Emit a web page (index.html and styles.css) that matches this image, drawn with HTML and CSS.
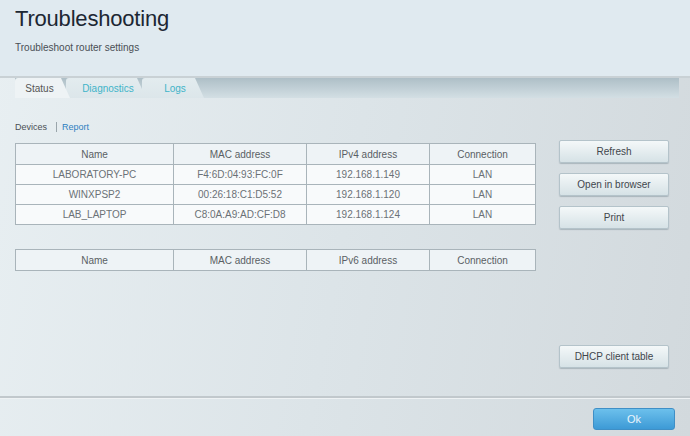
FILE: index.html
```html
<!DOCTYPE html>
<html lang="en">
<head>
    <meta charset="UTF-8">
    <title>Troubleshooting</title>
    <link rel="stylesheet" href="styles.css">
</head>
<body>
    <div class="header">
        <h1>Troubleshooting</h1>
        <div class="subtitle">Troubleshoot router settings</div>
    </div>
    <div class="tabbar">
        <div class="tab active">Status</div>
        <div class="tab">Diagnostics</div>
        <div class="tab">Logs</div>
    </div>
    <div class="main">
        <div class="left">
            <div class="subnav">
                <span class="current">Devices</span>
                <span class="sep"></span>
                <a class="link">Report</a>
            </div>
            <table class="grid">
                <tr>
                    <th class="c-name">Name</th>
                    <th class="c-mac">MAC address</th>
                    <th class="c-ip">IPv4 address</th>
                    <th>Connection</th>
                </tr>
                <tr><td>LABORATORY-PC</td><td>F4:6D:04:93:FC:0F</td><td>192.168.1.149</td><td>LAN</td></tr>
                <tr><td>WINXPSP2</td><td>00:26:18:C1:D5:52</td><td>192.168.1.120</td><td>LAN</td></tr>
                <tr><td>LAB_LAPTOP</td><td>C8:0A:A9:AD:CF:D8</td><td>192.168.1.124</td><td>LAN</td></tr>
            </table>
            <table class="grid second">
                <tr>
                    <th class="c-name">Name</th>
                    <th class="c-mac">MAC address</th>
                    <th class="c-ip">IPv6 address</th>
                    <th>Connection</th>
                </tr>
            </table>
        </div>
        <div class="right">
            <button class="btn">Refresh</button>
            <button class="btn">Open in browser</button>
            <button class="btn">Print</button>
            <button class="btn dhcp">DHCP client table</button>
        </div>
    </div>
    <div class="footer">
        <button class="ok">Ok</button>
    </div>
</body>
</html>
```

FILE: styles.css
```css
body {
    margin: 0;
    width: 690px;
    height: 436px;
    overflow: hidden;
    font-family: 'Liberation Sans', Arial, sans-serif;
    color: #555;
    background: linear-gradient(100deg, #e8eff2 0%, #dce4e8 50%, #d2d9dd 100%);
    display: flex;
    flex-direction: column;
}

.header {
    height: 78px;
    box-sizing: border-box;
    padding: 6px 15px 0;
    background: #e0eaf0;
    border-bottom: 2px solid #c9d1d5;
}

h1 {
    margin: 0;
    font-size: 22px;
    font-weight: normal;
    color: #1c2733;
    letter-spacing: -0.2px;
}

.subtitle {
    margin-top: 10px;
    font-size: 10px;
    color: #4a4f55;
}

.tabbar {
    display: flex;
    height: 20px;
    margin: 0 11px 0 15px;
    background: linear-gradient(to bottom, #aebfc7, #d3dfe4);
}

.tab {
    position: relative;
    height: 20px;
    line-height: 21px;
    font-size: 10px;
    color: #3fb4c9;
    text-align: center;
    box-sizing: border-box;
    background: linear-gradient(to bottom, #e3ecef, #dce6ea);
    border-radius: 3px 0 0 0;
    clip-path: polygon(0 0, calc(100% - 9px) 0, 100% 100%, 0 100%);
}

.tab.active {
    width: 55px;
    padding-right: 6px;
    color: #555;
    background: #eef3f5;
    z-index: 3;
}

.tab:nth-child(2) {
    width: 80px;
    margin-left: -4px;
    padding-left: 4px;
    z-index: 2;
}

.tab:nth-child(3) {
    width: 62px;
    margin-left: -4px;
    padding-left: 4px;
    z-index: 1;
}

.main {
    flex: 1;
    display: flex;
    gap: 23px;
    padding-left: 15px;
}

.left {
    width: 521px;
}

.subnav {
    margin-top: 23px;
    height: 12px;
    display: flex;
    align-items: center;
    font-size: 9px;
}

.current {
    color: #4a4f55;
}

.sep {
    width: 1px;
    height: 10px;
    background: #9aa5ab;
    margin: 0 5px 0 9px;
}

.link {
    color: #2e7fc0;
}

.grid {
    width: 521px;
    margin-top: 10px;
    border-collapse: collapse;
    font-size: 10px;
    color: #6b7176;
}

.grid th,
.grid td {
    border: 1px solid #a9b4ba;
    height: 19px;
    padding: 0;
    text-align: center;
    font-weight: normal;
}

.grid th {
    background: #eef3f6;
    height: 20px;
    color: #5a5f64;
}

.grid td {
    background: #f8fafb;
}

.c-name { width: 157px; }
.c-mac { width: 132px; }
.c-ip { width: 122px; }

.grid.second {
    margin-top: 24px;
}

.right {
    display: flex;
    flex-direction: column;
    gap: 10px;
    padding: 42px 0 28px;
}

.btn {
    width: 110px;
    height: 23px;
    border: 1px solid #b4c3ca;
    border-radius: 2px;
    background: linear-gradient(to bottom, #f4f8f9, #d6e2e6);
    box-shadow: 0 1px 1px rgba(90, 110, 120, 0.35);
    font-family: 'Liberation Sans', Arial, sans-serif;
    font-size: 10px;
    color: #3f464c;
    padding: 0;
}

.btn.dhcp {
    margin-top: auto;
}

.footer {
    height: 40px;
    box-sizing: border-box;
    border-top: 2px solid #c1c8cc;
    box-shadow: inset 0 1px 0 #eef2f4;
    display: flex;
    justify-content: flex-end;
    align-items: flex-start;
    padding: 10px 15px 0 0;
}

.ok {
    width: 82px;
    height: 22px;
    border: 1px solid #3f8fc6;
    border-radius: 3px;
    background: linear-gradient(to bottom, #6cc0ec, #3d9ad6);
    color: #eaf5fc;
    font-family: 'Liberation Sans', Arial, sans-serif;
    font-size: 11px;
    padding: 0;
}
```
